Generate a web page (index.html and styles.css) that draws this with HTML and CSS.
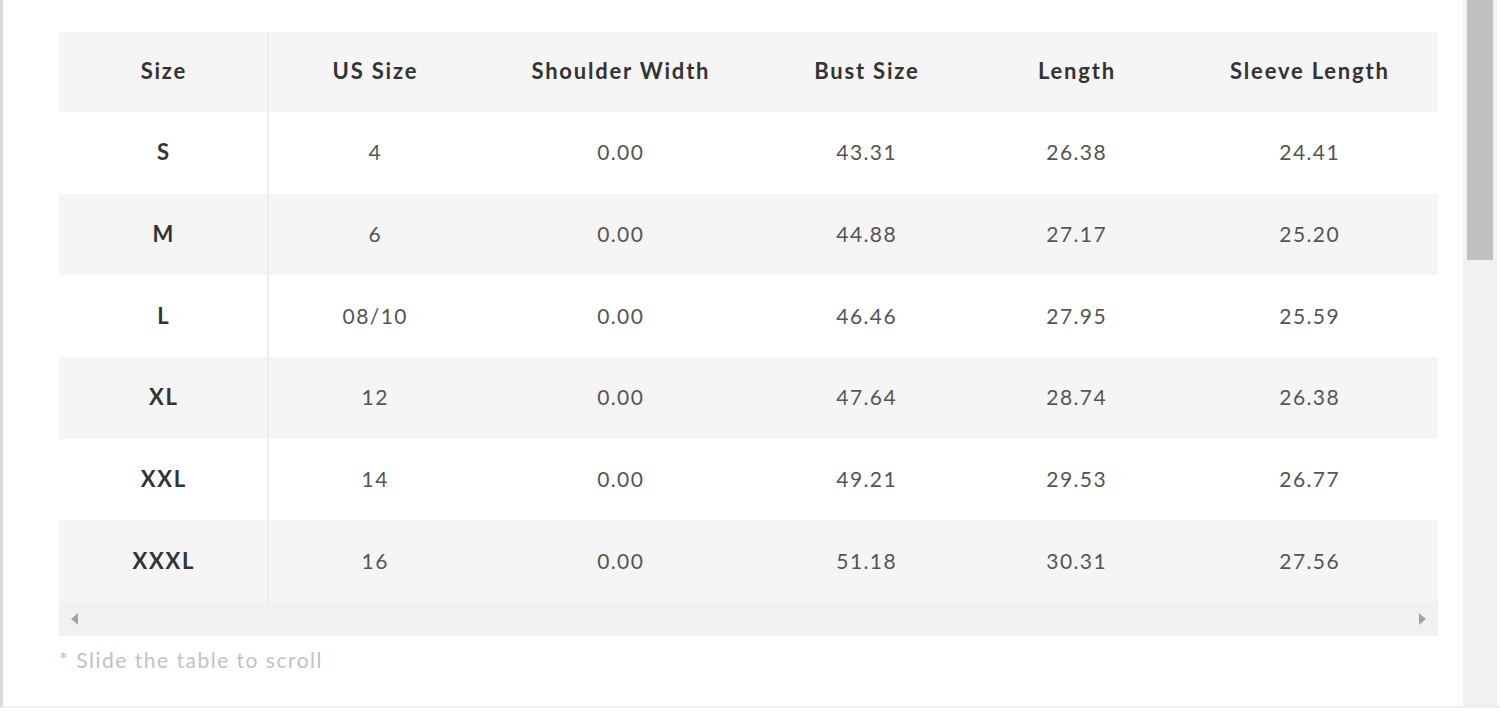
FILE: index.html
```html
<!DOCTYPE html>
<html lang="en">
<head>
<meta charset="utf-8">
<title>Size chart</title>
<link rel="stylesheet" href="styles.css">
</head>
<body>
<div class="frame">
  <div class="content">
    <div class="table-wrap">
      <table class="chart">
        <colgroup>
          <col class="c1"><col class="c2"><col class="c3"><col class="c4"><col class="c5"><col class="c6">
        </colgroup>
        <thead>
          <tr><th class="first">Size</th><th>US Size</th><th>Shoulder Width</th><th>Bust Size</th><th>Length</th><th>Sleeve Length</th></tr>
        </thead>
        <tbody>
          <tr><td class="first">S</td><td>4</td><td>0.00</td><td>43.31</td><td>26.38</td><td>24.41</td></tr>
          <tr class="alt"><td class="first">M</td><td>6</td><td>0.00</td><td>44.88</td><td>27.17</td><td>25.20</td></tr>
          <tr><td class="first">L</td><td>08/10</td><td>0.00</td><td>46.46</td><td>27.95</td><td>25.59</td></tr>
          <tr class="alt"><td class="first">XL</td><td>12</td><td>0.00</td><td>47.64</td><td>28.74</td><td>26.38</td></tr>
          <tr><td class="first">XXL</td><td>14</td><td>0.00</td><td>49.21</td><td>29.53</td><td>26.77</td></tr>
          <tr class="alt"><td class="first">XXXL</td><td>16</td><td>0.00</td><td>51.18</td><td>30.31</td><td>27.56</td></tr>
        </tbody>
      </table>
      <div class="hscroll">
        <span class="arrow left"></span>
        <span class="arrow right"></span>
      </div>
    </div>
    <p class="note">* Slide the table to scroll</p>
  </div>
  <div class="vscroll"><div class="thumb"></div></div>
</div>
</body>
</html>
```

FILE: styles.css
```css
html, body {
  margin: 0;
  padding: 0;
  background: #ffffff;
}
body {
  font-family: Lato, "Open Sans", sans-serif;
  width: 1500px;
  height: 711px;
  overflow: hidden;
}
.frame {
  display: flex;
  height: 706px;
  border-left: 3px solid #dadada;
  border-bottom: 2px solid #f0f0f0;
}
.content {
  flex: 1;
  padding: 32px 25px 0 56px;
}
.table-wrap {
  width: 1379px;
}
.chart {
  border-collapse: collapse;
  table-layout: fixed;
  width: 1379px;
}
.c1 { width: 209px; }
.c2 { width: 212px; }
.c3 { width: 280px; }
.c4 { width: 212px; }
.c5 { width: 208px; }
.c6 { width: 258px; }
.chart th, .chart td {
  padding: 0;
  text-align: center;
  vertical-align: middle;
}
.chart th {
  height: 80px;
  padding-bottom: 3px;
  box-sizing: border-box;
  background: #f5f5f5;
  color: #333333;
  font-weight: 700;
  font-size: 22px;
  letter-spacing: 1.8px;
  text-indent: 1.8px;
}
.chart td {
  height: 81.67px;
  padding-bottom: 2px;
  box-sizing: border-box;
  color: #555555;
  font-size: 21px;
  font-weight: 400;
  letter-spacing: 1.4px;
  text-indent: 1.4px;
}
.chart td.first {
  color: #333333;
  font-weight: 700;
  font-size: 22px;
  letter-spacing: 1.8px;
  text-indent: 1.8px;
}
.chart .first {
  border-right: 2px solid #ececec;
}
.chart tr.alt td {
  background: #f5f5f5;
}
.hscroll {
  height: 34px;
  background: #f1f1f1;
  display: flex;
  align-items: center;
  justify-content: space-between;
  padding: 0 12px 0 12px;
}
.arrow {
  width: 0;
  height: 0;
  border-top: 6px solid transparent;
  border-bottom: 6px solid transparent;
}
.arrow.left { border-right: 7px solid #a3a3a3; }
.arrow.right { border-left: 7px solid #a3a3a3; }
.note {
  margin: 12px 0 0 0;
  font-size: 21px;
  letter-spacing: 1.5px;
  color: #c2c2c2;
  line-height: 24px;
}
.vscroll {
  width: 34px;
  margin-right: 3px;
  background: #f1f1f1;
  padding: 0 4px;
  box-sizing: border-box;
}
.thumb {
  height: 260px;
  background: #c1c1c1;
}
```
